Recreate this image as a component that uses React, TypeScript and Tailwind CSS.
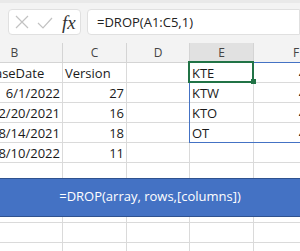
import React from "react";

type Row = {
  b?: string;
  bLeft?: boolean;
  c?: string;
  cLeft?: boolean;
  e?: string;
  f?: string;
};

const rows: Row[] = [
  { b: "ReleaseDate", bLeft: true, c: "Version", cLeft: true, e: "KTE", f: "44713" },
  { b: "6/1/2022", c: "27", e: "KTW", f: "44550" },
  { b: "12/20/2021", c: "16", e: "KTO", f: "44422" },
  { b: "8/14/2021", c: "18", e: "OT", f: "44783" },
  { b: "8/10/2022", c: "11" },
];

const cols = "grid grid-cols-[96px_64px_63px_64px_85px] -ml-[33px] w-[372px]";
const cell = "border-r border-b border-[#dadada] flex items-end px-[2px] leading-[18px] overflow-hidden whitespace-nowrap";

const Cell: React.FC<{ text?: string; left?: boolean }> = ({ text, left }) => (
  <div className={`${cell} ${left ? "justify-start" : "justify-end"}`}>{text}</div>
);

const EmptyRow: React.FC<{ h: string }> = ({ h }) => (
  <div className={`${cols} ${h}`}>
    <div className="border-r border-b border-[#dadada]" />
    <div className="border-r border-b border-[#dadada]" />
    <div className="border-r border-b border-[#dadada]" />
    <div className="border-r border-b border-[#dadada]" />
    <div className="border-r border-b border-[#dadada]" />
  </div>
);

export default function App() {
  return (
    <div
      className="relative w-[300px] h-[251px] overflow-hidden bg-white text-[13px] text-[#1a1a1a]"
      style={{ fontFamily: "'Open Sans', 'Noto Sans', sans-serif" }}
    >
      {/* formula bar */}
      <div className="h-[43px] bg-[#f3f3f3] border-t-[3px] border-[#e9e9e9] flex items-start pt-[6px] pl-[8px] gap-[6px]">
        <div className="w-[73px] h-[26px] bg-white border border-[#e0e0e0] rounded-[4px] flex items-center pl-[5px] gap-[8px]">
          <svg width="14" height="14" viewBox="0 0 14 14" className="ml-[1px]">
            <path d="M1 1 L13 13 M13 1 L1 13" stroke="#c2c2c2" strokeWidth="1.2" fill="none" />
          </svg>
          <svg width="16" height="12" viewBox="0 0 16 12" className="mt-[2px]">
            <path d="M1 6 L6 11 L15 1" stroke="#c2c2c2" strokeWidth="1.2" fill="none" />
          </svg>
          <span
            className="italic text-[19px] leading-none text-[#333] ml-[1px]"
            style={{ fontFamily: "'Liberation Serif', 'DejaVu Serif', serif" }}
          >
            fx
          </span>
        </div>
        <div className="flex-1 h-[26px] bg-white border border-[#e0e0e0] rounded-l-[4px] leading-[24px] pl-[9px] text-[#222]">
          =DROP(A1:C5,1)
        </div>
      </div>

      {/* column headers */}
      <div className={`${cols} h-[20px] bg-[#f3f3f3] text-[12px] text-[#444]`}>
        {["B", "C", "D", "E", "F"].map((l) => (
          <div
            key={l}
            className={`border-r border-b border-[#d4d4d4] flex items-center justify-center leading-none pt-[1px] ${
              l === "E" ? "bg-[#e1e1e1]" : ""
            }`}
          >
            {l}
          </div>
        ))}
      </div>

      {/* data rows */}
      {rows.map((r, i) => (
        <div key={i} className={`${cols} h-[20px]`}>
          <Cell text={r.b} left={r.bLeft} />
          <Cell text={r.c} left={r.cLeft} />
          <Cell />
          <Cell text={r.e} left />
          <Cell text={r.f} />
        </div>
      ))}
      <div className={`${cols} h-[15px]`}>
        <div className="border-r border-[#dadada]" />
        <div className="border-r border-[#dadada]" />
        <div className="border-r border-[#dadada]" />
        <div className="border-r border-[#dadada]" />
        <div className="border-r border-[#dadada]" />
      </div>

      {/* syntax banner */}
      <div className="h-[39px] bg-[#4472c4] border-y border-[#2f528f] flex items-center justify-center text-white text-[13px] pb-[1px]">
        =DROP(array, rows,[columns])
      </div>

      <EmptyRow h="h-[6px]" />
      <EmptyRow h="h-[20px]" />
      <EmptyRow h="h-[20px]" />

      {/* spill range border */}
      <div className="absolute left-[189px] top-[62px] w-[160px] h-[81px] border border-[#4472c4] pointer-events-none" />
      {/* active cell */}
      <div className="absolute left-[188px] top-[61px] w-[66px] h-[22px] border-2 border-[#217346] pointer-events-none" />
      <div className="absolute left-[251px] top-[79px] w-[5px] h-[5px] bg-[#217346]" />
    </div>
  );
}
